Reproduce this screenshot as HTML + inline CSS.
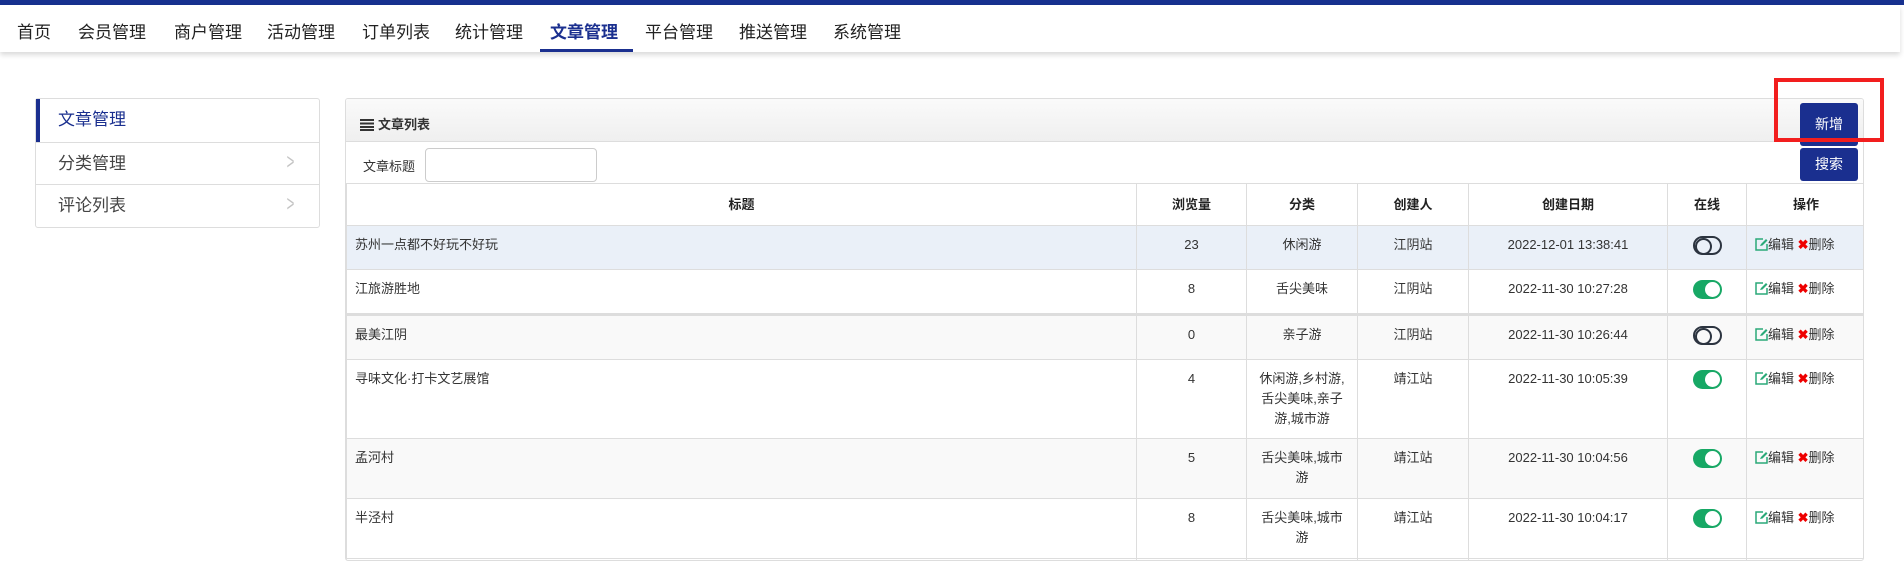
<!DOCTYPE html>
<html><head><meta charset="utf-8"><style>
*{box-sizing:border-box;margin:0;padding:0}
body{width:1904px;height:561px;overflow:hidden;background:#fff;font-family:"Liberation Sans","Noto Sans CJK SC",sans-serif;color:#333;position:relative}
.top{position:absolute;left:0;top:0;width:1904px;height:5px;background:#17318f}
.nav{position:absolute;left:0;top:5px;width:1900px;height:47px;background:#fff;box-shadow:0 3px 5px rgba(0,0,0,.15)}
.nav span{position:absolute;top:13px;font-size:17px;color:#222;white-space:nowrap}
.nav span.act{color:#1a2f8f;font-weight:bold}
.nav .ul{position:absolute;left:540px;top:44px;width:93px;height:3px;background:#1a2f8f}
.side{position:absolute;left:35px;top:98px;width:285px;border:1px solid #ddd;border-radius:3px}
.side div{height:42.5px;line-height:42px;font-size:17px;padding-left:22px;border-top:1px solid #ddd;color:#444;position:relative}
.side div:first-child{border-top:none;border-left:4px solid #1a2f8f;color:#1a2f8f;padding-left:18px}
.side div i{position:absolute;right:22px;top:-2px;color:#c4c4c4;font-style:normal;font-size:22px;transform:scaleX(.6)}
.panel{position:absolute;left:345px;top:98px;width:1519px;height:463px;border:1px solid #ddd;border-radius:3px;overflow:hidden}
.ph{height:43px;background:linear-gradient(#fafafa,#efefef);border-bottom:1px solid #ddd;font-size:13px;font-weight:bold;color:#333;padding:15px 0 0 14px}
.ph b{display:inline-block;vertical-align:-2px;width:14px;height:12px;margin-right:4px;background:repeating-linear-gradient(#333 0 2px,transparent 2px 3.4px)}
.sr{height:41px;position:relative;font-size:13px}
.sr .lb{position:absolute;left:17px;top:14px}
.sr .in{position:absolute;left:79px;top:6px;width:172px;height:34px;border:1px solid #ccc;border-radius:4px}
table{border-collapse:collapse;width:1519px;table-layout:fixed;font-size:13px}
td,th{border:1px solid #ddd;padding:0 8px;vertical-align:top;line-height:20px}
th{height:42px;vertical-align:middle;font-weight:bold;color:#222}
td{padding-top:9px;color:#333}
td.c{text-align:center}
.tg{display:inline-block;width:29px;height:19px;border-radius:10px;position:relative;vertical-align:middle}
.off{border:2px solid #2c3440}
.off:after{content:"";position:absolute;left:0;top:0;width:13px;height:13px;border:2px solid #2c3440;border-radius:50%}
.on{background:#17a865}
.on:after{content:"";position:absolute;right:2px;top:2px;width:15px;height:15px;background:#fff;border-radius:50%}
.ed{display:inline-block;width:13px;height:13px;vertical-align:-2px}
.x{color:#e00;font-weight:bold}
.btn{position:absolute;left:1800px;width:58px;background:#1a2f8f;color:#fff;font-size:14px;text-align:center;border-radius:3px}
.red{position:absolute;left:1774px;top:78px;width:110px;height:64px;border:4px solid #f21e1e}
</style></head><body>
<div class="top"></div>
<div class="nav">
<span style="left:17px">首页</span><span style="left:78px">会员管理</span><span style="left:174px">商户管理</span><span style="left:267px">活动管理</span><span style="left:362px">订单列表</span><span style="left:455px">统计管理</span><span class="act" style="left:550px">文章管理</span><span style="left:645px">平台管理</span><span style="left:739px">推送管理</span><span style="left:833px">系统管理</span>
<div class="ul"></div>
</div>
<div class="side"><div>文章管理</div><div>分类管理<i>&gt;</i></div><div>评论列表<i>&gt;</i></div></div>
<div class="panel">
<div class="ph"><b></b>文章列表</div>
<div class="sr"><span class="lb">文章标题</span><div class="in"></div></div>
<table>
<colgroup><col style="width:790px"><col style="width:110px"><col style="width:111px"><col style="width:111px"><col style="width:199px"><col style="width:79px"><col style="width:119px"></colgroup>
<tr><th>标题</th><th>浏览量</th><th>分类</th><th>创建人</th><th>创建日期</th><th>在线</th><th>操作</th></tr>
<tr style="height:44px;background:#eaf0f8"><td>苏州一点都不好玩不好玩</td><td class="c">23</td><td class="c">休闲游</td><td class="c">江阴站</td><td class="c">2022-12-01 13:38:41</td><td class="c"><span class="tg off"></span></td><td><svg class="ed" viewBox="0 0 13 13"><path d="M8 1H1v11h11V6" fill="none" stroke="#2aa978" stroke-width="1.5"/><path d="M5 8l1-2 5-5 1.5 1.5-5 5z" fill="#2aa978"/></svg>编辑 <span class="x">✖</span>删除</td></tr>
<tr style="height:45px"><td>江旅游胜地</td><td class="c">8</td><td class="c">舌尖美味</td><td class="c">江阴站</td><td class="c">2022-11-30 10:27:28</td><td class="c"><span class="tg on"></span></td><td><svg class="ed" viewBox="0 0 13 13"><path d="M8 1H1v11h11V6" fill="none" stroke="#2aa978" stroke-width="1.5"/><path d="M5 8l1-2 5-5 1.5 1.5-5 5z" fill="#2aa978"/></svg>编辑 <span class="x">✖</span>删除</td></tr>
<tr style="height:45px;background:#f9f9f9;border-top:3px solid #ddd"><td>最美江阴</td><td class="c">0</td><td class="c">亲子游</td><td class="c">江阴站</td><td class="c">2022-11-30 10:26:44</td><td class="c"><span class="tg off"></span></td><td><svg class="ed" viewBox="0 0 13 13"><path d="M8 1H1v11h11V6" fill="none" stroke="#2aa978" stroke-width="1.5"/><path d="M5 8l1-2 5-5 1.5 1.5-5 5z" fill="#2aa978"/></svg>编辑 <span class="x">✖</span>删除</td></tr>
<tr style="height:79px"><td>寻味文化·打卡文艺展馆</td><td class="c">4</td><td class="c">休闲游,乡村游,<br>舌尖美味,亲子<br>游,城市游</td><td class="c">靖江站</td><td class="c">2022-11-30 10:05:39</td><td class="c"><span class="tg on"></span></td><td><svg class="ed" viewBox="0 0 13 13"><path d="M8 1H1v11h11V6" fill="none" stroke="#2aa978" stroke-width="1.5"/><path d="M5 8l1-2 5-5 1.5 1.5-5 5z" fill="#2aa978"/></svg>编辑 <span class="x">✖</span>删除</td></tr>
<tr style="height:60px;background:#f9f9f9"><td>孟河村</td><td class="c">5</td><td class="c">舌尖美味,城市<br>游</td><td class="c">靖江站</td><td class="c">2022-11-30 10:04:56</td><td class="c"><span class="tg on"></span></td><td><svg class="ed" viewBox="0 0 13 13"><path d="M8 1H1v11h11V6" fill="none" stroke="#2aa978" stroke-width="1.5"/><path d="M5 8l1-2 5-5 1.5 1.5-5 5z" fill="#2aa978"/></svg>编辑 <span class="x">✖</span>删除</td></tr>
<tr style="height:60px"><td>半泾村</td><td class="c">8</td><td class="c">舌尖美味,城市<br>游</td><td class="c">靖江站</td><td class="c">2022-11-30 10:04:17</td><td class="c"><span class="tg on"></span></td><td><svg class="ed" viewBox="0 0 13 13"><path d="M8 1H1v11h11V6" fill="none" stroke="#2aa978" stroke-width="1.5"/><path d="M5 8l1-2 5-5 1.5 1.5-5 5z" fill="#2aa978"/></svg>编辑 <span class="x">✖</span>删除</td></tr>
<tr style="height:40px"><td></td><td></td><td></td><td></td><td></td><td></td><td></td></tr>
</table>
</div>
<div class="btn" style="top:103px;height:43px;line-height:43px">新增</div>
<div class="btn" style="top:148px;height:33px;line-height:33px">搜索</div>
<div class="red"></div>
</body></html>
